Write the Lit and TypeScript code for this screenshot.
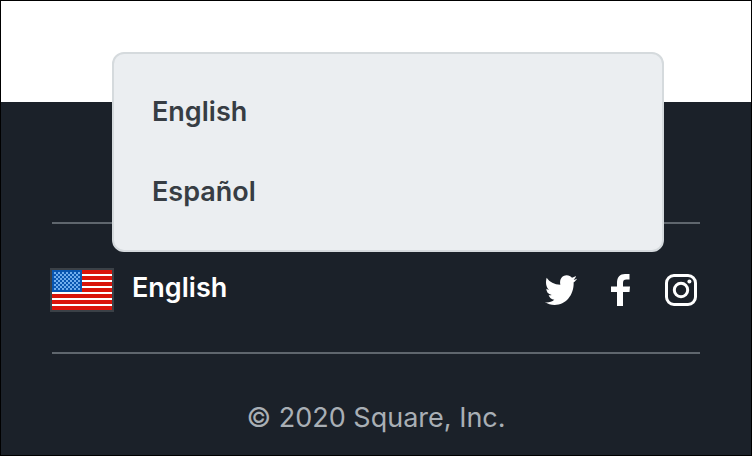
import { LitElement, html, css, svg } from "lit";
import { customElement, state } from "lit/decorators.js";

const stripes = [4, 10, 16, 22, 28, 34];

@customElement("us-flag")
class UsFlag extends LitElement {
  static styles = css`
    :host {
      display: block;
      flex: none;
    }
    .flag {
      display: block;
      width: 60px;
      height: 40px;
      border: 2px solid #3b4147;
    }
  `;

  render() {
    return html`<svg class="flag" viewBox="0 0 60 40" shape-rendering="crispEdges" aria-hidden="true">
      <defs>
        <pattern id="stars" width="4" height="4" patternUnits="userSpaceOnUse" x="2" y="2">
          <path d="M0 0h2v2h-2zM2 2h2v2h-2z" fill="#70aeee" />
        </pattern>
      </defs>
      <rect width="60" height="40" fill="#d9140a" />
      ${stripes.map((y) => svg`<rect y=${y} width="60" height="2" fill="#fff" />`)}
      <rect width="30" height="22" fill="#0956b0" />
      <rect x="2" y="2" width="26" height="18" fill="url(#stars)" />
    </svg>`;
  }
}

@customElement("app-root")
class AppRoot extends LitElement {
  static styles = css`
    :host {
      display: block;
      font-family: Inter, "Liberation Sans", sans-serif;
      font-size: 27px;
      line-height: 40px;
    }
    * {
      box-sizing: border-box;
    }
    .page {
      display: flex;
      flex-direction: column;
      min-height: 100vh;
      border: 1px solid #000;
      background: #fff;
    }
    .content {
      height: 101px;
    }
    .footer {
      flex: 1;
      padding: 120px 51px 16px;
      background: #1b2129;
    }
    .bar {
      position: relative;
      display: flex;
      align-items: center;
      justify-content: space-between;
      height: 132px;
      padding-top: 4px;
      border-top: 2px solid #5f666d;
      border-bottom: 2px solid #5f666d;
    }
    button {
      font: inherit;
      font-weight: 600;
      border: 0;
      padding: 0;
      background: none;
      cursor: pointer;
      text-align: left;
    }
    .current {
      display: flex;
      align-items: center;
      gap: 18px;
      margin-left: -2px;
      color: #fff;
    }
    .label {
      padding-bottom: 4px;
    }
    .menu {
      position: absolute;
      left: 60px;
      right: 36px;
      bottom: 100px;
      margin: 0;
      padding: 18px 38px;
      list-style: none;
      background: #ebeef1;
      border: 2px solid #d5dadd;
      border-radius: 12px;
    }
    .option {
      display: block;
      width: 100%;
      height: 80px;
      color: #373d44;
    }
    .social {
      display: flex;
      gap: 28px;
      padding-right: 3px;
    }
    .social a {
      display: block;
      color: #fff;
    }
    .icon {
      display: block;
      width: 32px;
      height: 32px;
    }
    .legal {
      margin: 0;
      padding-top: 44px;
      text-align: center;
      color: #a9afb5;
    }
  `;

  @state() open = true;
  @state() language = "English";

  choose(language: string) {
    this.language = language;
    this.open = false;
  }

  render() {
    return html`<div class="page">
      <main class="content"></main>
      <footer class="footer">
        <div class="bar">
          <button class="current" aria-expanded=${this.open} @click=${() => (this.open = !this.open)}>
            <us-flag></us-flag><span class="label">${this.language}</span>
          </button>
          ${this.open
            ? html`<ul class="menu">
                ${["English", "Español"].map(
                  (name) => html`<li><button class="option" @click=${() => this.choose(name)}>${name}</button></li>`
                )}
              </ul>`
            : ""}
          <nav class="social" aria-label="Social media">
            <a href="#twitter" aria-label="Twitter">
              <svg class="icon" viewBox="0 -4 96 96" fill="currentColor">
                <path d="M5 7C14 20 28 27 46 28C43 12 51 0 65 0C72 0 77 3 81 7C85 6 89 4 93 2C92 7 89 10 86 13C89 13 93 11 96 10C93 15 90 18 86 21C87 60 62 89 29 89C18 89 8 86 0 81C11 82 21 79 28 73C19 72 13 67 11 59C14 60 17 60 20 59C9 56 4 49 4 40C7 42 10 43 12 43C3 36 1 20 5 7Z" />
              </svg>
            </a>
            <a href="#facebook" aria-label="Facebook">
              <svg class="icon" viewBox="0 0 32 32" fill="currentColor">
                <path d="M12 32V18H6V12.5H12V9C12 3 15 0 20 0H24.5V5.5H21.5C19 5.5 18 6.5 18 9V12.5H25L24.5 18H18V32Z" />
              </svg>
            </a>
            <a href="#instagram" aria-label="Instagram">
              <svg class="icon" viewBox="0 0 32 32" fill="none" stroke="currentColor" stroke-width="3">
                <rect x="1.5" y="1.5" width="29" height="29" rx="7.5" />
                <circle cx="16" cy="16" r="6.7" />
                <circle cx="24.4" cy="7.6" r="2" fill="currentColor" stroke="none" />
              </svg>
            </a>
          </nav>
        </div>
        <p class="legal">© 2020 Square, Inc.</p>
      </footer>
    </div>`;
  }
}
